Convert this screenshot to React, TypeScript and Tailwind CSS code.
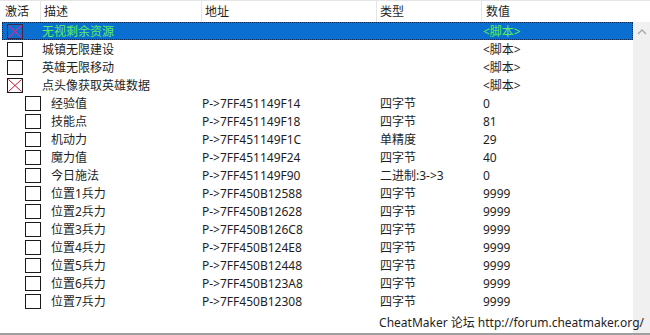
import React from "react";

type Row = { level: 0 | 1; checked?: boolean; desc: string; addr?: string; type?: string; value: string };

const rows: Row[] = [
  { level: 0, checked: true, desc: "无视剩余资源", value: "<脚本>" },
  { level: 0, desc: "城镇无限建设", value: "<脚本>" },
  { level: 0, desc: "英雄无限移动", value: "<脚本>" },
  { level: 0, checked: true, desc: "点头像获取英雄数据", value: "<脚本>" },
  { level: 1, desc: "经验值", addr: "P->7FF451149F14", type: "四字节", value: "0" },
  { level: 1, desc: "技能点", addr: "P->7FF451149F18", type: "四字节", value: "81" },
  { level: 1, desc: "机动力", addr: "P->7FF451149F1C", type: "单精度", value: "29" },
  { level: 1, desc: "魔力值", addr: "P->7FF451149F24", type: "四字节", value: "40" },
  { level: 1, desc: "今日施法", addr: "P->7FF451149F90", type: "二进制:3->3", value: "0" },
  { level: 1, desc: "位置1兵力", addr: "P->7FF450B12588", type: "四字节", value: "9999" },
  { level: 1, desc: "位置2兵力", addr: "P->7FF450B12628", type: "四字节", value: "9999" },
  { level: 1, desc: "位置3兵力", addr: "P->7FF450B126C8", type: "四字节", value: "9999" },
  { level: 1, desc: "位置4兵力", addr: "P->7FF450B124E8", type: "四字节", value: "9999" },
  { level: 1, desc: "位置5兵力", addr: "P->7FF450B12448", type: "四字节", value: "9999" },
  { level: 1, desc: "位置6兵力", addr: "P->7FF450B123A8", type: "四字节", value: "9999" },
  { level: 1, desc: "位置7兵力", addr: "P->7FF450B12308", type: "四字节", value: "9999" },
];

function Box({ checked, selected }: { checked?: boolean; selected?: boolean }) {
  return (
    <div className={`w-[16px] h-[15px] border ${selected ? "border-[#3a2a50] bg-[#0a6fd0]" : "border-[#1a1a1a] bg-white"} relative shrink-0`}>
      {checked && (
        <svg className="absolute inset-0" width="14" height="13" viewBox="0 0 14 13">
          <path d="M0.5 0.5 L13.5 12.5 M13.5 0.5 L0.5 12.5" stroke={selected ? "#b03a9c" : "#d01030"} strokeWidth={selected ? 1.3 : 1} />
        </svg>
      )}
    </div>
  );
}

export default function App() {
  return (
    <div
      className="relative w-[650px] h-[335px] bg-white overflow-hidden text-[12px] text-[#1e1e1e]"
      style={{ fontFamily: '"Noto Sans", "Noto Sans CJK SC", sans-serif' }}
    >
      {/* header */}
      <div className="flex h-[22px] items-center border-t border-[#e5e5e5] leading-none">
        <div className="w-[41px] pl-[5px] border-r border-[#e5e5e5] h-full flex items-center">激活</div>
        <div className="w-[161px] pl-[3px] border-r border-[#e5e5e5] h-full flex items-center">描述</div>
        <div className="w-[175px] pl-[3px] border-r border-[#e5e5e5] h-full flex items-center">地址</div>
        <div className="w-[105px] pl-[3px] border-r border-[#e5e5e5] h-full flex items-center">类型</div>
        <div className="flex-1 pl-[4px] h-full flex items-center">数值</div>
      </div>
      <div className="flex">
        <div className="w-[633px] flex flex-col">
          {rows.map((r, i) => {
            const sel = i === 0;
            return (
              <div
                key={i}
                className={`flex h-[18px] items-center leading-none ${
                  sel ? "bg-[#0a6fd0] text-[#5cf05c] outline outline-1 outline-dotted outline-[#0b2a55] -outline-offset-1 ml-[2px] w-[631px]" : "w-[633px]"
                }`}
              >
                <div className={`${sel ? "w-[200px]" : "w-[202px]"} flex items-center h-full`}>
                  {r.level === 0 ? (
                    <>
                      <div className={sel ? "ml-[5px]" : "ml-[7px]"}>
                        <Box checked={r.checked} selected={sel} />
                      </div>
                      <span className="ml-[19px] pt-[2px]">{r.desc}</span>
                    </>
                  ) : (
                    <>
                      <div className="ml-[25px]">
                        <Box />
                      </div>
                      <span className="ml-[10px] pt-[2px]">{r.desc}</span>
                    </>
                  )}
                </div>
                <div className="w-[178px] pt-[2px]">{r.addr ?? ""}</div>
                <div className="w-[103px] pt-[2px]">{r.type ?? ""}</div>
                <div className="flex-1 pt-[2px]">{r.value}</div>
              </div>
            );
          })}
        </div>
        <div className="w-[17px] h-[313px] bg-[#f0f0f0] flex justify-center pt-[6px]">
          <svg width="10" height="8" viewBox="0 0 10 8">
            <path d="M1 6 L5 2 L9 6" stroke="#a6a6a6" strokeWidth="1.3" fill="none" />
          </svg>
        </div>
      </div>
      <div className="absolute left-0 right-0 bottom-0 h-[2px] bg-[#a0a0a0]" />
      <div className="absolute right-[6px] bottom-[4px] text-[12px] leading-[16px] text-[#1e1e1e]">
        CheatMaker 论坛 http://forum.cheatmaker.org/
      </div>
    </div>
  );
}
